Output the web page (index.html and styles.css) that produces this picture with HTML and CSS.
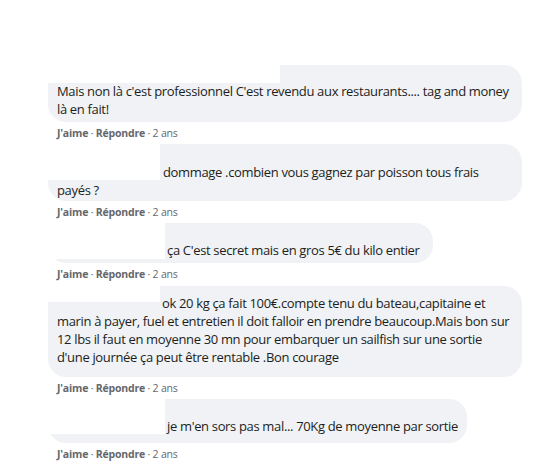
FILE: index.html
```html
<!DOCTYPE html>
<html lang="fr">
<head>
  <meta charset="UTF-8">
  <meta name="viewport" content="width=device-width, initial-scale=1">
  <title>Commentaires</title>
  <link rel="stylesheet" href="styles.css">
</head>
<body>

  <!-- Fil de commentaires (noms masqués) -->
  <div class="thread">

    <div class="comment c1">
      <div class="bubble wide">
        <span class="mask"></span>
        <p>Mais non là c'est professionnel C'est revendu aux restaurants.... tag and money<br>là en fait!</p>
      </div>
      <div class="meta"><b>J'aime</b> · <b>Répondre</b> · 2 ans</div>
    </div>

    <div class="comment c2">
      <div class="bubble wide">
        <span class="mask"></span>
        <p>dommage .combien vous gagnez par poisson tous frais<br>payés ?</p>
      </div>
      <div class="meta"><b>J'aime</b> · <b>Répondre</b> · 2 ans</div>
    </div>

    <div class="comment c3">
      <div class="bubble">
        <span class="mask"></span>
        <p>ça C'est secret mais en gros 5€ du kilo entier</p>
      </div>
      <div class="meta"><b>J'aime</b> · <b>Répondre</b> · 2 ans</div>
    </div>

    <div class="comment c4">
      <div class="bubble wide">
        <span class="mask"></span>
        <p>ok 20 kg ça fait 100€.compte tenu du bateau,capitaine et<br>marin à payer, fuel et entretien il doit falloir en prendre beaucoup.Mais bon sur<br>12 lbs il faut en moyenne 30 mn pour embarquer un sailfish sur une sortie<br>d'une journée ça peut être rentable .Bon courage</p>
      </div>
      <div class="meta"><b>J'aime</b> · <b>Répondre</b> · 2 ans</div>
    </div>

    <div class="comment c5">
      <div class="bubble">
        <span class="mask"></span>
        <p>je m'en sors pas mal... 70Kg de moyenne par sortie</p>
      </div>
      <div class="meta"><b>J'aime</b> · <b>Répondre</b> · 2 ans</div>
    </div>

  </div>

</body>
</html>
```

FILE: styles.css
```css
body {
  margin: 0;
  padding: 0;
  background: #fff;
  font-family: 'Open Sans', 'Noto Sans', sans-serif;
  color: #1c1e21;
}

.thread {
  padding: 65px 0 0 48px;
}

.comment {
  margin-bottom: 4px;
}

.bubble {
  display: inline-block;
  position: relative;
  box-sizing: border-box;
  background-color: #f0f2f5;
  border-radius: 18px;
  padding: 17px 12px 4px 9px;
  white-space: nowrap;
}

.bubble.wide {
  width: 474px;
}

.bubble p {
  margin: 0;
  font-size: 13px;
  line-height: 18px;
  letter-spacing: -0.34px;
}

/* zone blanche là où le nom a été effacé */
.mask {
  position: absolute;
  top: 0;
  left: 0;
  background: #fff;
}

.meta {
  margin: 4px 0 0 9px;
  font-size: 10.5px;
  line-height: 14px;
  letter-spacing: -0.2px;
  color: #65676b;
}

.meta b {
  font-weight: 700;
}

.c1 .mask { width: 232px; height: 18px; }

.c2 .bubble { padding-top: 19px; padding-bottom: 2px; }
.c2 .mask { width: 112px; height: 36px; }
.c2 p { text-indent: 106px; }

.c3 .bubble { width: 385px; padding-top: 18px; }
.c3 .mask { width: 117px; height: 36px; }
.c3 p { text-indent: 110px; }
.c3 { margin-bottom: 5px; }

.c4 .bubble { padding-top: 8px; padding-bottom: 11px; }
.c4 .mask { width: 112px; height: 16px; }
.c4 p { text-indent: 105px; }

.c5 .bubble { width: 419px; padding-top: 18px; padding-bottom: 8px; }
.c5 .mask { width: 117px; height: 35px; }
.c5 p { text-indent: 110px; }
```
